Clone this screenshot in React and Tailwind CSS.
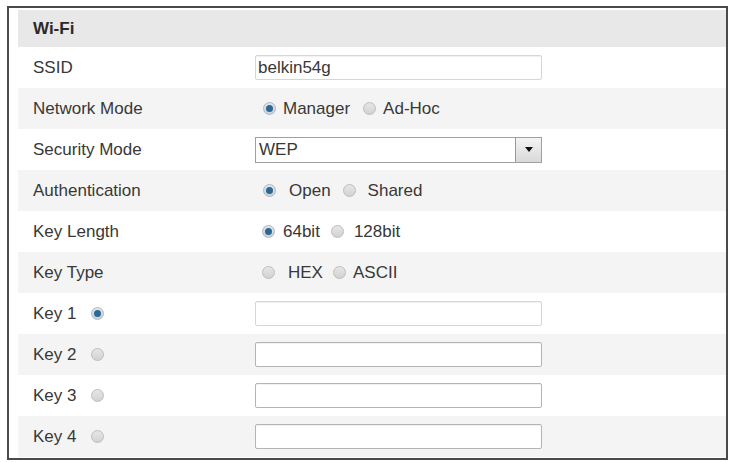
import React from "react";

const font = { fontFamily: '"Liberation Sans", Arial, sans-serif' };

function Radio({ checked, className = "" }) {
  return (
    <span
      className={
        "inline-flex items-center justify-center w-[13px] h-[13px] rounded-full border shrink-0 " +
        (checked
          ? "border-[#aeb8c2] bg-gradient-to-b from-[#dfe5eb] to-[#c9d2da] "
          : "border-[#bdbdbd] bg-gradient-to-b from-[#e6e6e6] to-[#d2d2d2] ") +
        className
      }
    >
      {checked && <span className="w-[7px] h-[7px] rounded-full bg-[#2d6894]" />}
    </span>
  );
}

function Row({ gray, label, children }) {
  return (
    <div className={"flex items-center h-[41px] " + (gray ? "bg-[#f4f4f4]" : "bg-white")}>
      <div className="w-[237px] pl-[15px] flex items-center shrink-0">{label}</div>
      <div className="flex items-center">{children}</div>
    </div>
  );
}

function TextInput({ value = "", light }) {
  return (
    <div
      className={
        "w-[287px] h-[25px] bg-white border rounded-[2px] flex items-center pl-[2px] shadow-[inset_0_1px_1px_rgba(0,0,0,0.06)] " +
        (light ? "border-[#d6d6d6]" : "border-[#b4b4b4]")
      }
    >
      {value}
    </div>
  );
}

export default function App() {
  return (
    <div className="w-[731px] h-[462px] bg-white pt-[6px] pl-[7px] text-[17px] text-[#383838] leading-none" style={font}>
      <div className="w-[721px] h-[454px] border-2 border-[#4a4a4a] pl-[9px] pt-[2px]">
        <div className="h-[37px] bg-[#e8e8e8] flex items-center pl-[15px] font-bold text-[#2a2a2a]">
          Wi-Fi
        </div>
        <Row label="SSID">
          <TextInput value="belkin54g" light />
        </Row>
        <Row gray label="Network Mode">
          <Radio checked className="ml-[8px]" />
          <span className="ml-[7px]">Manager</span>
          <Radio className="ml-[13px]" />
          <span className="ml-[7px]">Ad-Hoc</span>
        </Row>
        <Row label="Security Mode">
          <div className="w-[287px] h-[26px] bg-white border border-[#a0a0a0] flex items-center">
            <span className="flex-1 pl-[3px]">WEP</span>
            <span className="w-[26px] h-[24px] border-l border-[#999] bg-gradient-to-b from-[#f4f4f4] to-[#d9d9d9] flex items-center justify-center">
              <svg width="8" height="5" viewBox="0 0 8 5">
                <path d="M0 0 H8 L4 5 Z" fill="#111" />
              </svg>
            </span>
          </div>
        </Row>
        <Row gray label="Authentication">
          <Radio checked className="ml-[8px]" />
          <span className="ml-[13px]">Open</span>
          <Radio className="ml-[12px]" />
          <span className="ml-[12px]">Shared</span>
        </Row>
        <Row label="Key Length">
          <Radio checked className="ml-[7px]" />
          <span className="ml-[8px]">64bit</span>
          <Radio className="ml-[11px]" />
          <span className="ml-[10px]">128bit</span>
        </Row>
        <Row gray label="Key Type">
          <Radio className="ml-[7px]" />
          <span className="ml-[13px]">HEX</span>
          <Radio className="ml-[10px]" />
          <span className="ml-[7px]">ASCII</span>
        </Row>
        {[1, 2, 3, 4].map((n) => (
          <Row
            key={n}
            gray={n % 2 === 0}
            label={
              <>
                <span>Key {n}</span>
                <Radio checked={n === 1} className="ml-[14px]" />
              </>
            }
          >
            <TextInput light={n === 1} />
          </Row>
        ))}
      </div>
    </div>
  );
}
